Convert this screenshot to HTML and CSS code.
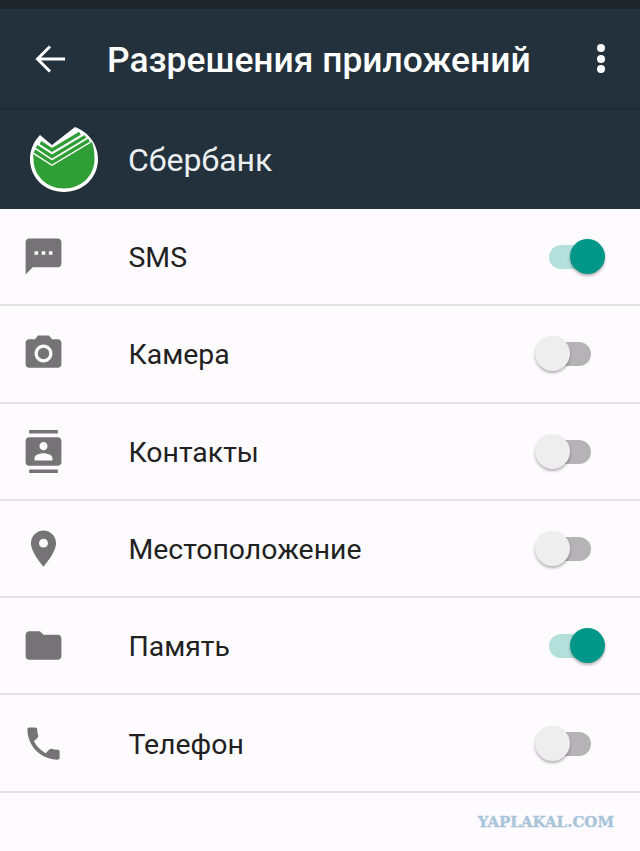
FILE: index.html
```html
<!DOCTYPE html>
<html lang="ru">
<head>
    <meta charset="UTF-8">
    <meta name="viewport" content="width=device-width, initial-scale=1.0">
    <title>Разрешения приложений</title>
    <link rel="stylesheet" href="styles.css">
</head>
<body>
    <div class="status-bar"></div>

    <header class="app-bar">
        <svg class="back-icon" viewBox="0 0 32 32"><path d="M30 16H3M15 3.500 2.500 16 15 28.500"/></svg>
        <h1>Разрешения приложений</h1>
        <div class="more">
            <span></span><span></span><span></span>
        </div>
    </header>

    <div class="app-info">
        <svg class="logo" viewBox="25 120 80 75">
            <path class="logo-ring" d="M30 157C30 148 34 139 40 133L52 143 75 125C88 130 98 142 98 157 98 176 83 190 64 190 45 190 30 176 30 157Z"/>
            <path class="logo-green" d="M33 152 52 164 92 140C93.800 145 94.500 151 94.500 157 94.500 174 81 186.500 64 186.500 47 186.500 33.500 174 33.500 157Z"/>
            <polyline class="logo-stripe" points="34.500,149 52,160.500 89,138.300"/>
            <polyline class="logo-stripe" points="36.500,144.400 52,154.500 85.500,134.400"/>
            <polyline class="logo-stripe" points="40.500,140.500 52,148 80,131.200"/>
        </svg>
        <span class="app-name">Сбербанк</span>
    </div>

    <ul class="perm-list">
        <li class="perm">
            <svg class="perm-icon" viewBox="0 0 24 24"><path d="M20 2H4c-1.100 0-1.990.9-1.990 2L2 22l4-4h14c1.100 0 2-.9 2-2V4c0-1.100-.9-2-2-2zM9 11H7V9h2v2zm4 0h-2V9h2v2zm4 0h-2V9h2v2z"/></svg>
            <span class="perm-name">SMS</span>
            <div class="switch on"><span class="thumb"></span></div>
        </li>
        <li class="perm">
            <svg class="perm-icon" viewBox="0 0 24 24"><circle cx="12" cy="12" r="3.200"/><path d="M9 2 7.170 4H4c-1.100 0-2 .9-2 2v12c0 1.100.9 2 2 2h16c1.100 0 2-.9 2-2V6c0-1.100-.9-2-2-2h-3.170L15 2H9zm3 15c-2.760 0-5-2.240-5-5s2.240-5 5-5 5 2.240 5 5-2.240 5-5 5z"/></svg>
            <span class="perm-name">Камера</span>
            <div class="switch"><span class="thumb"></span></div>
        </li>
        <li class="perm">
            <svg class="perm-icon" viewBox="0 0 24 24"><path d="M20 0H4v2h16V0zM4 24h16v-2H4v2zM20 4H4c-1.100 0-2 .9-2 2v12c0 1.100.9 2 2 2h16c1.100 0 2-.9 2-2V6c0-1.100-.9-2-2-2zm-8 2.750c1.240 0 2.250 1.010 2.250 2.250s-1.010 2.250-2.250 2.250S9.750 10.240 9.750 9 10.760 6.750 12 6.750zM17 17H7v-1.500c0-1.670 3.330-2.500 5-2.500s5 .83 5 2.500V17z"/></svg>
            <span class="perm-name">Контакты</span>
            <div class="switch"><span class="thumb"></span></div>
        </li>
        <li class="perm">
            <svg class="perm-icon" viewBox="0 0 24 24"><path d="M12 2C8.130 2 5 5.130 5 9c0 5.250 7 13 7 13s7-7.750 7-13c0-3.870-3.130-7-7-7zm0 9.500c-1.380 0-2.500-1.120-2.500-2.500s1.120-2.500 2.500-2.500 2.500 1.120 2.500 2.500-1.120 2.500-2.500 2.500z"/></svg>
            <span class="perm-name">Местоположение</span>
            <div class="switch"><span class="thumb"></span></div>
        </li>
        <li class="perm">
            <svg class="perm-icon" viewBox="0 0 24 24"><path d="M10 4H4c-1.100 0-1.990.9-1.990 2L2 18c0 1.100.9 2 2 2h16c1.100 0 2-.9 2-2V8c0-1.100-.9-2-2-2h-8l-2-2z"/></svg>
            <span class="perm-name">Память</span>
            <div class="switch on"><span class="thumb"></span></div>
        </li>
        <li class="perm">
            <svg class="perm-icon" viewBox="0 0 24 24"><path d="M6.620 10.790c1.440 2.830 3.760 5.140 6.590 6.590l2.200-2.200c.27-.27.67-.36 1.020-.24 1.120.37 2.330.57 3.570.57.550 0 1 .45 1 1V20c0 .55-.45 1-1 1-9.390 0-17-7.610-17-17 0-.55.45-1 1-1h3.500c.55 0 1 .45 1 1 0 1.250.2 2.450.57 3.570.11.350.03.740-.25 1.020l-2.200 2.200z"/></svg>
            <span class="perm-name">Телефон</span>
            <div class="switch"><span class="thumb"></span></div>
        </li>
    </ul>

    <div class="watermark">YAPLAKAL.COM</div>
</body>
</html>
```

FILE: styles.css
```css
* {
    box-sizing: border-box;
}
html, body {
    height: 100%;
}
body {
    margin: 0;
    overflow: hidden;
    background: #fefbfe;
    color: #212121;
    font-family: Roboto, "Noto Sans", sans-serif;
}
.status-bar {
    height: 9px;
    background: #1f2529;
}
.app-bar {
    height: 101px;
    padding: 0 35px 0 35px;
    display: flex;
    align-items: center;
    background: #22313b;
    border-bottom: 2px solid #1e2a33;
}
.back-icon {
    width: 32px;
    height: 32px;
    margin-right: 40px;
    fill: none;
    stroke: #fff;
    stroke-width: 3;
}
.app-bar h1 {
    margin: 0;
    padding-top: 3px;
    flex: 1;
    color: #fff;
    font-size: 35.400px;
    font-weight: 500;
    white-space: nowrap;
}
.more {
    display: flex;
    flex-direction: column;
    gap: 2.500px;
}
.more span {
    width: 8px;
    height: 8px;
    border-radius: 50%;
    background: #fff;
}
.app-info {
    height: 99px;
    padding-left: 25px;
    display: flex;
    align-items: center;
    background: #22313b;
}
.logo {
    width: 80px;
    height: 75px;
    margin-right: 23px;
}
.logo-ring {
    fill: #fff;
}
.logo-green {
    fill: #2f9e34;
}
.logo-stripe {
    fill: none;
    stroke: #2f9e34;
    stroke-width: 3.400;
}
.app-name {
    color: #eceff1;
    font-size: 32px;
}
.perm-list {
    margin: 0;
    padding: 0;
    list-style: none;
}
.perm {
    height: 97.300px;
    padding: 0 35px 0 21.500px;
    display: flex;
    align-items: center;
    border-bottom: 2px solid #e3e1e3;
}
.perm-icon {
    width: 43px;
    height: 43px;
    margin-right: 64px;
    fill: #757375;
}
.perm-name {
    flex: 1;
    padding-top: 2px;
    font-size: 28.400px;
}
.switch {
    position: relative;
    width: 70px;
    height: 35px;
    display: flex;
    justify-content: flex-start;
}
.switch::before {
    content: "";
    position: absolute;
    left: 14px;
    top: 6px;
    width: 42px;
    height: 24px;
    border-radius: 12px;
    background: #b5b3b5;
}
.thumb {
    position: relative;
    width: 35px;
    height: 35px;
    border-radius: 50%;
    background: #eeeeee;
    box-shadow: 0 2px 3px rgba(0, 0, 0, .3);
}
.switch.on {
    justify-content: flex-end;
}
.switch.on::before {
    background: #b3e0da;
}
.switch.on .thumb {
    background: #009688;
}
.watermark {
    padding: 20px 26px 0 0;
    text-align: right;
    color: #a9c5da;
    font-family: "DejaVu Serif", serif;
    font-size: 15px;
    font-weight: 700;
    -webkit-text-stroke: .4px #a9c5da;
}
```
